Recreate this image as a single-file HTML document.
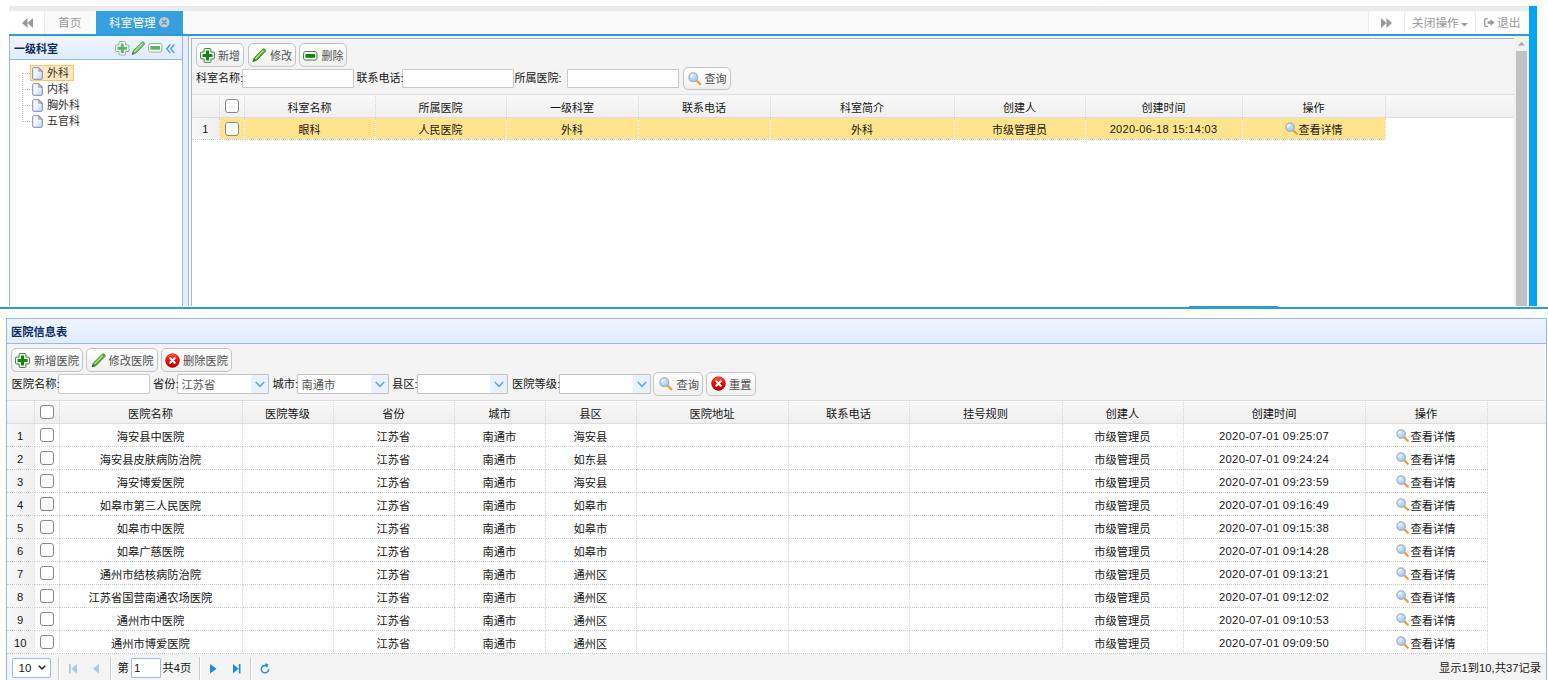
<!DOCTYPE html><html lang="zh-CN"><head><meta charset="utf-8"><title>科室管理</title><style>
*{box-sizing:border-box;margin:0;padding:0}
html,body{width:1548px;height:680px;overflow:hidden;background:#fff}
body{position:relative;font-family:"Liberation Sans","Noto Sans CJK SC",sans-serif;font-size:11.25px;color:#161616;line-height:1}
.a{position:absolute}
.ic{display:block;position:absolute;overflow:visible}
.t{position:absolute;white-space:nowrap;font-size:inherit;line-height:14px;height:14px;z-index:2}
.btn{position:absolute;border:1px solid #c4c4c4;border-radius:5px;background:linear-gradient(#fff,#f0f0f0)}
.btn .t{color:#505050}
.inp{position:absolute;border:1px solid #c9c9c9;background:#fff;border-radius:1px}
.combo{position:absolute;border:1px solid #c2c2c2;background:#fff;border-radius:1px}
.combo i{position:absolute;right:0;top:0;bottom:0;width:17px;background:#e8f1fd}
.combo .t{color:#555;left:3.5px;top:3px}
table{border-collapse:collapse;table-layout:fixed;position:absolute}
td,th{font-weight:normal;font-size:inherit;line-height:14px;text-align:center;white-space:nowrap;overflow:hidden;border-right:1px dotted #d4d4d4;border-bottom:1px dotted #ccc;padding:6px 0 0 0;position:relative;vertical-align:top}
th{border-bottom:1px solid #ddd;padding-top:7px}
.tt td{padding-top:5px}
td.rn{background:linear-gradient(90deg,#f9f9f9,#efefef)}
.cb{position:absolute;left:50%;margin-left:-7px;top:4.5px;width:14px;height:14px;border:1.2px solid #888;border-radius:3px;background:#fff}
th .cb{top:5px}
.dt{letter-spacing:.29px;position:relative;top:-1px}
td.rn{padding-top:5px}
.tt td.rn{padding-top:4px}
.lk{display:inline-block;position:relative;padding-left:14px}
.lk .ic{left:0;top:0}
</style></head><body>
<svg width="0" height="0" style="position:absolute;left:0;top:0"><defs><linearGradient id="gc" x1="0" y1="0" x2="0" y2="1"><stop offset="0" stop-color="#ff5a48"/><stop offset=".45" stop-color="#f01010"/><stop offset="1" stop-color="#b80000"/></linearGradient><radialGradient id="gs" cx=".4" cy=".35" r=".7"><stop offset="0" stop-color="#dceeff"/><stop offset="1" stop-color="#8cc4fa"/></radialGradient><linearGradient id="gf" x1="0" y1="0" x2="1" y2="1"><stop offset="0" stop-color="#fff"/><stop offset=".45" stop-color="#f2f7ff"/><stop offset="1" stop-color="#bcd4f6"/></linearGradient></defs></svg>
<div style="font-size:11px">
<div class="a" style="left:160px;top:0px;width:940px;height:2px;background:#fbfbfb"></div>
<div class="a" style="left:9px;top:6px;width:1520px;height:5px;background:#ebebed"></div>
<div class="a" style="left:9px;top:11px;width:1520px;height:23px;background:#fafafa"></div>
<div class="a" style="left:9px;top:11px;width:35px;height:23px;background:#fff"></div>
<div class="a" style="left:44px;top:11px;width:1px;height:23px;background:#ececec"></div>
<svg class="ic" style="left:21.5px;top:18px" width="11" height="10" viewBox="0 0 11 10"><path d="M5.5 0v10L0 5zM11 0v10L5.5 5z" fill="#999"/></svg>
<div class="t" style="left:58px;top:16px;font-size:11.7px;color:#999">首页</div>
<div class="a" style="left:96px;top:11px;width:87px;height:23px;background:#369fde"></div>
<div class="t" style="left:109px;top:16px;font-size:11.7px;color:#fff">科室管理</div>
<svg class="ic" style="left:159px;top:17px" width="10.5" height="10.5" viewBox="0 0 10 10"><circle cx="5" cy="5" r="5" fill="#cbc8c3"/><path d="M3.3 3.3l3.4 3.4M6.7 3.3l-3.4 3.4" stroke="#369fde" stroke-width="1.5" stroke-linecap="round"/></svg>
<div class="a" style="left:1369px;top:11px;width:160px;height:23px;background:#fff"></div>
<div class="a" style="left:1368px;top:11px;width:1px;height:23px;background:#ececec"></div>
<div class="a" style="left:1404px;top:11px;width:1px;height:23px;background:#ececec"></div>
<div class="a" style="left:1475px;top:11px;width:1px;height:23px;background:#ececec"></div>
<svg class="ic" style="left:1380.5px;top:18px" width="11" height="10" viewBox="0 0 11 10"><path d="M0 0v10l5.5-5zM5.5 0v10L11 5z" fill="#999"/></svg>
<div class="t" style="left:1412px;top:16px;font-size:11.7px;color:#999">关闭操作</div>
<svg class="ic" style="left:1461px;top:23px" width="7" height="3.5" viewBox="0 0 7 3.5"><path d="M0 0h7L3.5 3.5z" fill="#999"/></svg>
<svg class="ic" style="left:1484px;top:18px" width="10.5" height="9" viewBox="0 0 10.5 9"><path d="M3.8 .7H2a1.3 1.3 0 0 0-1.3 1.3v5a1.3 1.3 0 0 0 1.3 1.3h1.8" fill="none" stroke="#999" stroke-width="1.3"/><path d="M3.6 3.3h3V1L10.5 4.5 6.6 8V5.7h-3z" fill="#999"/></svg>
<div class="t" style="left:1497px;top:16px;font-size:11.7px;color:#999">退出</div>
<div class="a" style="left:9px;top:34px;width:1520px;height:2px;background:#2e9ade"></div>
<div class="a" style="left:1529px;top:6px;width:8px;height:300px;background:#00a4f6"></div>
<div class="a" style="left:9px;top:36px;width:174px;height:270px;border-left:1px solid #95b8e7;border-right:1px solid #95b8e7;background:#fff"></div>
<div class="a" style="left:10px;top:36px;width:172px;height:24px;background:linear-gradient(#eff5ff,#e0ecff);border-bottom:1px solid #95b8e7"></div>
<div class="t" style="left:14px;top:42px;font-weight:bold;color:#0e2d5f">一级科室</div>
<svg class="ic" style="left:115px;top:41px" width="14.5" height="14.5" viewBox="0 0 15 15" ><path d="M5 .6h5a.9.9 0 0 1 .9.9V4.1h2.6a.9.9 0 0 1 .9.9v5a.9.9 0 0 1-.9.9H10.9v2.6a.9.9 0 0 1-.9.9H5a.9.9 0 0 1-.9-.9V10.9H1.5a.9.9 0 0 1-.9-.9V5a.9.9 0 0 1 .9-.9h2.6V1.5A.9.9 0 0 1 5 .6z" fill="#fff" stroke="#8aac8d" stroke-width="1"/><path d="M6 2.5h3V6h3.5v3H9v3.5H6V9H2.5V6H6z" fill="#5cb565"/></svg>
<svg opacity=".8" class="ic" style="left:131.2px;top:40.8px" width="14.5" height="14.5" viewBox="0 0 14 14" ><path d="M1 13l1.2-3.6L10.6 1.2c.5-.5 1.2-.5 1.7 0l.5.5c.5.5.5 1.2 0 1.7L4.6 11.8z" fill="#4db32a" stroke="#2f7d1c" stroke-width=".8" stroke-linejoin="round"/><path d="M3.3 10.2L11.2 2.3" stroke="#b6ec8c" stroke-width="1.1"/><path d="M1 13l.8-2.4 1.6 1.6z" fill="#4a4a3a"/></svg>
<svg class="ic" style="left:147.5px;top:43.2px" width="14.5" height="9.7" viewBox="0 0 15 10" ><rect x=".6" y=".6" width="13.8" height="8.8" rx="2" fill="#fff" stroke="#8aac8d" stroke-width="1"/><rect x="2.5" y="3" width="10" height="4" rx=".4" fill="#5cb565"/></svg>
<svg class="ic" style="left:166px;top:43.5px" width="9" height="9.5" viewBox="0 0 9 9.5"><path d="M4.3 .5L.8 4.75l3.5 4.25M8.3 .5L4.8 4.75l3.5 4.25" fill="none" stroke="#4a9be8" stroke-width="1.3"/></svg>
<div class="a" style="left:22px;top:73px;width:0px;height:49px;border-left:1px dotted #c4c4c4"></div>
<div class="a" style="left:22px;top:73px;width:8px;height:0px;border-top:1px dotted #c4c4c4"></div>
<div class="a" style="left:30px;top:65px;width:44px;height:16px;background:#ffe9bf;border:1px solid #ffc26b"></div>
<svg class="ic" style="left:32px;top:66.5px" width="11" height="13" viewBox="0 0 11 13" ><path d="M.7 1.5a.8.8 0 0 1 .8-.8H7l3.3 3.3v7.5a.8.8 0 0 1-.8.8h-8a.8.8 0 0 1-.8-.8z" fill="url(#gf)" stroke="#8088b8" stroke-width="1"/><path d="M6.8 .9v3.3h3.3z" fill="#c8d4ee" stroke="#7f88b8" stroke-width=".8" stroke-linejoin="round"/></svg>
<div class="t" style="left:47px;top:66px;color:#333">外科</div>
<div class="a" style="left:22px;top:89px;width:8px;height:0px;border-top:1px dotted #c4c4c4"></div>
<svg class="ic" style="left:32px;top:82.5px" width="11" height="13" viewBox="0 0 11 13" ><path d="M.7 1.5a.8.8 0 0 1 .8-.8H7l3.3 3.3v7.5a.8.8 0 0 1-.8.8h-8a.8.8 0 0 1-.8-.8z" fill="url(#gf)" stroke="#8088b8" stroke-width="1"/><path d="M6.8 .9v3.3h3.3z" fill="#c8d4ee" stroke="#7f88b8" stroke-width=".8" stroke-linejoin="round"/></svg>
<div class="t" style="left:47px;top:82px;color:#333">内科</div>
<div class="a" style="left:22px;top:105px;width:8px;height:0px;border-top:1px dotted #c4c4c4"></div>
<svg class="ic" style="left:32px;top:98.5px" width="11" height="13" viewBox="0 0 11 13" ><path d="M.7 1.5a.8.8 0 0 1 .8-.8H7l3.3 3.3v7.5a.8.8 0 0 1-.8.8h-8a.8.8 0 0 1-.8-.8z" fill="url(#gf)" stroke="#8088b8" stroke-width="1"/><path d="M6.8 .9v3.3h3.3z" fill="#c8d4ee" stroke="#7f88b8" stroke-width=".8" stroke-linejoin="round"/></svg>
<div class="t" style="left:47px;top:98px;color:#333">胸外科</div>
<div class="a" style="left:22px;top:121px;width:8px;height:0px;border-top:1px dotted #c4c4c4"></div>
<svg class="ic" style="left:32px;top:114.5px" width="11" height="13" viewBox="0 0 11 13" ><path d="M.7 1.5a.8.8 0 0 1 .8-.8H7l3.3 3.3v7.5a.8.8 0 0 1-.8.8h-8a.8.8 0 0 1-.8-.8z" fill="url(#gf)" stroke="#8088b8" stroke-width="1"/><path d="M6.8 .9v3.3h3.3z" fill="#c8d4ee" stroke="#7f88b8" stroke-width=".8" stroke-linejoin="round"/></svg>
<div class="t" style="left:47px;top:114px;color:#333">五官科</div>
<div class="a" style="left:183px;top:36px;width:5px;height:270px;background:#e6eefc"></div>
<div class="a" style="left:188px;top:36px;width:1326px;height:270px;border-left:1px solid #95b8e7;background:#fff"></div>
<div class="a" style="left:190.5px;top:38px;width:1323.5px;height:268px;border-left:1px solid #95b8e7;border-top:1px solid #95b8e7"></div>
<div class="a" style="left:191.5px;top:39px;width:1322.5px;height:56px;background:#f4f4f4;border-bottom:1px solid #ddd"></div>
<div class="btn" style="left:196px;top:43px;width:48px;height:24px">
<svg class="ic" style="left:3px;top:3.5px" width="15" height="15" viewBox="0 0 15 15" ><path d="M5 .6h5a.9.9 0 0 1 .9.9V4.1h2.6a.9.9 0 0 1 .9.9v5a.9.9 0 0 1-.9.9H10.9v2.6a.9.9 0 0 1-.9.9H5a.9.9 0 0 1-.9-.9V10.9H1.5a.9.9 0 0 1-.9-.9V5a.9.9 0 0 1 .9-.9h2.6V1.5A.9.9 0 0 1 5 .6z" fill="#fff" stroke="#3a7d3a" stroke-width="1"/><path d="M6 2.5h3V6h3.5v3H9v3.5H6V9H2.5V6H6z" fill="#0a8a0a"/></svg>
<div class="t" style="left:21px;top:4.5px;">新增</div>
</div>
<div class="btn" style="left:248px;top:43px;width:48px;height:24px">
<svg class="ic" style="left:3px;top:4.200000000000003px" width="14.5" height="14.5" viewBox="0 0 14 14" ><path d="M1 13l1.2-3.6L10.6 1.2c.5-.5 1.2-.5 1.7 0l.5.5c.5.5.5 1.2 0 1.7L4.6 11.8z" fill="#4db32a" stroke="#2f7d1c" stroke-width=".8" stroke-linejoin="round"/><path d="M3.3 10.2L11.2 2.3" stroke="#b6ec8c" stroke-width="1.1"/><path d="M1 13l.8-2.4 1.6 1.6z" fill="#4a4a3a"/></svg>
<div class="t" style="left:21px;top:4.5px;">修改</div>
</div>
<div class="btn" style="left:299px;top:43px;width:48px;height:24px">
<svg class="ic" style="left:3px;top:6.5px" width="14.5" height="9.7" viewBox="0 0 15 10" ><rect x=".6" y=".6" width="13.8" height="8.8" rx="2" fill="#fff" stroke="#3a7d3a" stroke-width="1"/><rect x="2.5" y="3" width="10" height="4" rx=".4" fill="#0a8a0a"/></svg>
<div class="t" style="left:21.5px;top:4.5px;">删除</div>
</div>
<div class="t" style="left:196px;top:71px;">科室名称:</div>
<div class="a" style="left:241.5px;top:69px;width:112px;height:19px;border:1px solid #c9c9c9;background:#fff;border-radius:1px"></div>
<div class="t" style="left:356.5px;top:71px;">联系电话:</div>
<div class="a" style="left:402px;top:69px;width:112px;height:19px;border:1px solid #c9c9c9;background:#fff;border-radius:1px"></div>
<div class="t" style="left:514.5px;top:71px;">所属医院:</div>
<div class="a" style="left:567px;top:69px;width:112px;height:19px;border:1px solid #c9c9c9;background:#fff;border-radius:1px"></div>
<div class="btn" style="left:682.5px;top:67px;width:48px;height:23px">
<svg class="ic" style="left:4px;top:4px" width="13.5" height="13.5" viewBox="0 0 14 14" ><path d="M9 9l3.7 3.7" stroke="#eaa030" stroke-width="2.4" stroke-linecap="round"/><circle cx="5.5" cy="5.5" r="4.6" fill="url(#gs)" stroke="#b0b2b6" stroke-width="1.3"/><path d="M2.9 5a2.8 2.8 0 0 1 2.4-2.3" stroke="#fff" stroke-width="1.1" fill="none" stroke-linecap="round" opacity=".8"/></svg>
<div class="t" style="left:21px;top:4px;">查询</div>
</div>
<div class="a" style="left:191.5px;top:95px;width:1322.5px;height:23px;background:linear-gradient(#f9f9f9,#efefef)"></div>
<div class="a" style="left:1385px;top:117px;width:129px;height:1px;background:#ddd"></div>
<table class="tt" style="left:192px;top:94px;width:1193px;font-size:11px"><colgroup><col style="width:27px"><col style="width:25px"><col style="width:131px"><col style="width:131px"><col style="width:132px"><col style="width:132px"><col style="width:184px"><col style="width:131px"><col style="width:157px"><col style="width:143px"></colgroup>
<tr style="height:23px"><th></th><th><span class="cb"></span></th><th>科室名称</th><th>所属医院</th><th>一级科室</th><th>联系电话</th><th>科室简介</th><th>创建人</th><th>创建时间</th><th>操作</th></tr>
<tr style="height:22px;background:#ffe48d"><td class="rn">1</td><td class=""><span class="cb"></span></td><td class="">眼科</td><td class="">人民医院</td><td class="">外科</td><td class=""></td><td class="">外科</td><td class="">市级管理员</td><td class=""><span class="dt">2020-06-18 15:14:03</span></td><td class=""><span class="lk"><svg class="ic" style="left:0;top:-1px" width="13" height="13" viewBox="0 0 14 14" ><path d="M9 9l3.7 3.7" stroke="#eaa030" stroke-width="2.4" stroke-linecap="round"/><circle cx="5.5" cy="5.5" r="4.6" fill="url(#gs)" stroke="#b0b2b6" stroke-width="1.3"/><path d="M2.9 5a2.8 2.8 0 0 1 2.4-2.3" stroke="#fff" stroke-width="1.1" fill="none" stroke-linecap="round" opacity=".8"/></svg>查看详情</span></td></tr>
</table>
<div class="a" style="left:1514px;top:36px;width:15px;height:270px;background:#f1f1f1"></div>
<div class="a" style="left:1516px;top:51px;width:11px;height:255px;background:#c1c1c1"></div>
<svg class="ic" style="left:1518px;top:42px" width="7" height="3.5" viewBox="0 0 7 3.5"><path d="M0 3.5h7L3.5 0z" fill="#a3a3a3"/></svg>
<div class="a" style="left:0px;top:307px;width:1548px;height:2px;background:#2e9ade"></div>
<div class="a" style="left:1189px;top:306px;width:89px;height:2px;background:#2e9ade"></div>
</div>
<div style="font-size:11.25px">
<div class="a" style="left:0px;top:309px;width:1548px;height:371px;background:#fefef8"></div>
<div class="a" style="left:6px;top:318px;width:1541px;height:362px;border:1px solid #95b8e7;border-bottom:0;background:#fff"></div>
<div class="a" style="left:7px;top:319px;width:1539px;height:24.5px;background:linear-gradient(#eff5ff,#e0ecff);border-bottom:1px solid #95b8e7"></div>
<div class="t" style="left:11px;top:325px;font-weight:bold;color:#0e2d5f">医院信息表</div>
<div class="a" style="left:7px;top:343.5px;width:1538px;height:57.5px;background:#f4f4f4;border-bottom:1px solid #ddd"></div>
<div class="btn" style="left:11px;top:348px;width:71.5px;height:23.5px">
<svg class="ic" style="left:3px;top:3.5px" width="15" height="15" viewBox="0 0 15 15" ><path d="M5 .6h5a.9.9 0 0 1 .9.9V4.1h2.6a.9.9 0 0 1 .9.9v5a.9.9 0 0 1-.9.9H10.9v2.6a.9.9 0 0 1-.9.9H5a.9.9 0 0 1-.9-.9V10.9H1.5a.9.9 0 0 1-.9-.9V5a.9.9 0 0 1 .9-.9h2.6V1.5A.9.9 0 0 1 5 .6z" fill="#fff" stroke="#3a7d3a" stroke-width="1"/><path d="M6 2.5h3V6h3.5v3H9v3.5H6V9H2.5V6H6z" fill="#0a8a0a"/></svg>
<div class="t" style="left:22px;top:4.5px;">新增医院</div>
</div>
<div class="btn" style="left:86px;top:348px;width:71.5px;height:23.5px">
<svg class="ic" style="left:3.5px;top:4.300000000000011px" width="15" height="15" viewBox="0 0 14 14" ><path d="M1 13l1.2-3.6L10.6 1.2c.5-.5 1.2-.5 1.7 0l.5.5c.5.5.5 1.2 0 1.7L4.6 11.8z" fill="#4db32a" stroke="#2f7d1c" stroke-width=".8" stroke-linejoin="round"/><path d="M3.3 10.2L11.2 2.3" stroke="#b6ec8c" stroke-width="1.1"/><path d="M1 13l.8-2.4 1.6 1.6z" fill="#4a4a3a"/></svg>
<div class="t" style="left:21.5px;top:4.5px;">修改医院</div>
</div>
<div class="btn" style="left:160.5px;top:348px;width:71.5px;height:23.5px">
<svg class="ic" style="left:3px;top:3.5px" width="15" height="15" viewBox="0 0 16 16" ><circle cx="8" cy="8" r="7.6" fill="url(#gc)"/><circle cx="8" cy="8" r="7.2" fill="none" stroke="#c00000" stroke-width=".8" opacity=".6"/><path d="M5.6 5.6l4.8 4.8M10.4 5.6l-4.8 4.8" stroke="#fff" stroke-width="2.3" stroke-linecap="round"/></svg>
<div class="t" style="left:21.5px;top:4.5px;">删除医院</div>
</div>
<div class="t" style="left:11.5px;top:376.5px;">医院名称:</div>
<div class="a" style="left:58px;top:374px;width:92px;height:19.5px;border:1px solid #c9c9c9;background:#fff;border-radius:1px"></div>
<div class="t" style="left:153px;top:376.5px;">省份:</div>
<div class="combo" style="left:177px;top:374px;width:92px;height:19.5px"><i><svg class="ic" style="left:3.5px;top:6px" width="10" height="6.5" viewBox="0 0 10 6.5"><path d="M.8 1l4.2 4.4L9.2 1" fill="none" stroke="#55acf0" stroke-width="1.6"/></svg></i><div class="t">江苏省</div></div>
<div class="t" style="left:272.5px;top:376.5px;">城市:</div>
<div class="combo" style="left:297px;top:374px;width:92px;height:19.5px"><i><svg class="ic" style="left:3.5px;top:6px" width="10" height="6.5" viewBox="0 0 10 6.5"><path d="M.8 1l4.2 4.4L9.2 1" fill="none" stroke="#55acf0" stroke-width="1.6"/></svg></i><div class="t">南通市</div></div>
<div class="t" style="left:392px;top:376.5px;">县区:</div>
<div class="combo" style="left:416.5px;top:374px;width:91.5px;height:19.5px"><i><svg class="ic" style="left:3.5px;top:6px" width="10" height="6.5" viewBox="0 0 10 6.5"><path d="M.8 1l4.2 4.4L9.2 1" fill="none" stroke="#55acf0" stroke-width="1.6"/></svg></i></div>
<div class="t" style="left:512px;top:376.5px;">医院等级:</div>
<div class="combo" style="left:559px;top:374px;width:92px;height:19.5px"><i><svg class="ic" style="left:3.5px;top:6px" width="10" height="6.5" viewBox="0 0 10 6.5"><path d="M.8 1l4.2 4.4L9.2 1" fill="none" stroke="#55acf0" stroke-width="1.6"/></svg></i></div>
<div class="btn" style="left:653px;top:372px;width:50px;height:24px">
<svg class="ic" style="left:4.5px;top:4px" width="13.5" height="13.5" viewBox="0 0 14 14" ><path d="M9 9l3.7 3.7" stroke="#eaa030" stroke-width="2.4" stroke-linecap="round"/><circle cx="5.5" cy="5.5" r="4.6" fill="url(#gs)" stroke="#b0b2b6" stroke-width="1.3"/><path d="M2.9 5a2.8 2.8 0 0 1 2.4-2.3" stroke="#fff" stroke-width="1.1" fill="none" stroke-linecap="round" opacity=".8"/></svg>
<div class="t" style="left:22.5px;top:4.5px;">查询</div>
</div>
<div class="btn" style="left:706px;top:372px;width:50px;height:24px">
<svg class="ic" style="left:4px;top:3px" width="15" height="15" viewBox="0 0 16 16" ><circle cx="8" cy="8" r="7.6" fill="url(#gc)"/><circle cx="8" cy="8" r="7.2" fill="none" stroke="#c00000" stroke-width=".8" opacity=".6"/><path d="M5.6 5.6l4.8 4.8M10.4 5.6l-4.8 4.8" stroke="#fff" stroke-width="2.3" stroke-linecap="round"/></svg>
<div class="t" style="left:22px;top:4.5px;">重置</div>
</div>
<div class="a" style="left:7px;top:401px;width:1539px;height:22px;background:linear-gradient(#f9f9f9,#efefef)"></div>
<div class="a" style="left:1487px;top:423px;width:59px;height:1px;background:#ddd"></div>
<table class="tb" style="left:7px;top:400px;width:1480px;font-size:11.25px"><colgroup><col style="width:27px"><col style="width:25px"><col style="width:183px"><col style="width:91px"><col style="width:121px"><col style="width:91px"><col style="width:91px"><col style="width:152px"><col style="width:121px"><col style="width:153px"><col style="width:121px"><col style="width:182px"><col style="width:122px"></colgroup>
<tr style="height:23px"><th></th><th><span class="cb"></span></th><th>医院名称</th><th>医院等级</th><th>省份</th><th>城市</th><th>县区</th><th>医院地址</th><th>联系电话</th><th>挂号规则</th><th>创建人</th><th>创建时间</th><th>操作</th></tr>
<tr style="height:23px;"><td class="rn">1</td><td class=""><span class="cb"></span></td><td class="">海安县中医院</td><td class=""></td><td class="">江苏省</td><td class="">南通市</td><td class="">海安县</td><td class=""></td><td class=""></td><td class=""></td><td class="">市级管理员</td><td class=""><span class="dt">2020-07-01 09:25:07</span></td><td class=""><span class="lk"><svg class="ic" style="left:0;top:-1px" width="13" height="13" viewBox="0 0 14 14" ><path d="M9 9l3.7 3.7" stroke="#eaa030" stroke-width="2.4" stroke-linecap="round"/><circle cx="5.5" cy="5.5" r="4.6" fill="url(#gs)" stroke="#b0b2b6" stroke-width="1.3"/><path d="M2.9 5a2.8 2.8 0 0 1 2.4-2.3" stroke="#fff" stroke-width="1.1" fill="none" stroke-linecap="round" opacity=".8"/></svg>查看详情</span></td></tr>
<tr style="height:23px;"><td class="rn">2</td><td class=""><span class="cb"></span></td><td class="">海安县皮肤病防治院</td><td class=""></td><td class="">江苏省</td><td class="">南通市</td><td class="">如东县</td><td class=""></td><td class=""></td><td class=""></td><td class="">市级管理员</td><td class=""><span class="dt">2020-07-01 09:24:24</span></td><td class=""><span class="lk"><svg class="ic" style="left:0;top:-1px" width="13" height="13" viewBox="0 0 14 14" ><path d="M9 9l3.7 3.7" stroke="#eaa030" stroke-width="2.4" stroke-linecap="round"/><circle cx="5.5" cy="5.5" r="4.6" fill="url(#gs)" stroke="#b0b2b6" stroke-width="1.3"/><path d="M2.9 5a2.8 2.8 0 0 1 2.4-2.3" stroke="#fff" stroke-width="1.1" fill="none" stroke-linecap="round" opacity=".8"/></svg>查看详情</span></td></tr>
<tr style="height:23px;"><td class="rn">3</td><td class=""><span class="cb"></span></td><td class="">海安博爱医院</td><td class=""></td><td class="">江苏省</td><td class="">南通市</td><td class="">海安县</td><td class=""></td><td class=""></td><td class=""></td><td class="">市级管理员</td><td class=""><span class="dt">2020-07-01 09:23:59</span></td><td class=""><span class="lk"><svg class="ic" style="left:0;top:-1px" width="13" height="13" viewBox="0 0 14 14" ><path d="M9 9l3.7 3.7" stroke="#eaa030" stroke-width="2.4" stroke-linecap="round"/><circle cx="5.5" cy="5.5" r="4.6" fill="url(#gs)" stroke="#b0b2b6" stroke-width="1.3"/><path d="M2.9 5a2.8 2.8 0 0 1 2.4-2.3" stroke="#fff" stroke-width="1.1" fill="none" stroke-linecap="round" opacity=".8"/></svg>查看详情</span></td></tr>
<tr style="height:23px;"><td class="rn">4</td><td class=""><span class="cb"></span></td><td class="">如皋市第三人民医院</td><td class=""></td><td class="">江苏省</td><td class="">南通市</td><td class="">如皋市</td><td class=""></td><td class=""></td><td class=""></td><td class="">市级管理员</td><td class=""><span class="dt">2020-07-01 09:16:49</span></td><td class=""><span class="lk"><svg class="ic" style="left:0;top:-1px" width="13" height="13" viewBox="0 0 14 14" ><path d="M9 9l3.7 3.7" stroke="#eaa030" stroke-width="2.4" stroke-linecap="round"/><circle cx="5.5" cy="5.5" r="4.6" fill="url(#gs)" stroke="#b0b2b6" stroke-width="1.3"/><path d="M2.9 5a2.8 2.8 0 0 1 2.4-2.3" stroke="#fff" stroke-width="1.1" fill="none" stroke-linecap="round" opacity=".8"/></svg>查看详情</span></td></tr>
<tr style="height:23px;"><td class="rn">5</td><td class=""><span class="cb"></span></td><td class="">如皋市中医院</td><td class=""></td><td class="">江苏省</td><td class="">南通市</td><td class="">如皋市</td><td class=""></td><td class=""></td><td class=""></td><td class="">市级管理员</td><td class=""><span class="dt">2020-07-01 09:15:38</span></td><td class=""><span class="lk"><svg class="ic" style="left:0;top:-1px" width="13" height="13" viewBox="0 0 14 14" ><path d="M9 9l3.7 3.7" stroke="#eaa030" stroke-width="2.4" stroke-linecap="round"/><circle cx="5.5" cy="5.5" r="4.6" fill="url(#gs)" stroke="#b0b2b6" stroke-width="1.3"/><path d="M2.9 5a2.8 2.8 0 0 1 2.4-2.3" stroke="#fff" stroke-width="1.1" fill="none" stroke-linecap="round" opacity=".8"/></svg>查看详情</span></td></tr>
<tr style="height:23px;"><td class="rn">6</td><td class=""><span class="cb"></span></td><td class="">如皋广慈医院</td><td class=""></td><td class="">江苏省</td><td class="">南通市</td><td class="">如皋市</td><td class=""></td><td class=""></td><td class=""></td><td class="">市级管理员</td><td class=""><span class="dt">2020-07-01 09:14:28</span></td><td class=""><span class="lk"><svg class="ic" style="left:0;top:-1px" width="13" height="13" viewBox="0 0 14 14" ><path d="M9 9l3.7 3.7" stroke="#eaa030" stroke-width="2.4" stroke-linecap="round"/><circle cx="5.5" cy="5.5" r="4.6" fill="url(#gs)" stroke="#b0b2b6" stroke-width="1.3"/><path d="M2.9 5a2.8 2.8 0 0 1 2.4-2.3" stroke="#fff" stroke-width="1.1" fill="none" stroke-linecap="round" opacity=".8"/></svg>查看详情</span></td></tr>
<tr style="height:23px;"><td class="rn">7</td><td class=""><span class="cb"></span></td><td class="">通州市结核病防治院</td><td class=""></td><td class="">江苏省</td><td class="">南通市</td><td class="">通州区</td><td class=""></td><td class=""></td><td class=""></td><td class="">市级管理员</td><td class=""><span class="dt">2020-07-01 09:13:21</span></td><td class=""><span class="lk"><svg class="ic" style="left:0;top:-1px" width="13" height="13" viewBox="0 0 14 14" ><path d="M9 9l3.7 3.7" stroke="#eaa030" stroke-width="2.4" stroke-linecap="round"/><circle cx="5.5" cy="5.5" r="4.6" fill="url(#gs)" stroke="#b0b2b6" stroke-width="1.3"/><path d="M2.9 5a2.8 2.8 0 0 1 2.4-2.3" stroke="#fff" stroke-width="1.1" fill="none" stroke-linecap="round" opacity=".8"/></svg>查看详情</span></td></tr>
<tr style="height:23px;"><td class="rn">8</td><td class=""><span class="cb"></span></td><td class="">江苏省国营南通农场医院</td><td class=""></td><td class="">江苏省</td><td class="">南通市</td><td class="">通州区</td><td class=""></td><td class=""></td><td class=""></td><td class="">市级管理员</td><td class=""><span class="dt">2020-07-01 09:12:02</span></td><td class=""><span class="lk"><svg class="ic" style="left:0;top:-1px" width="13" height="13" viewBox="0 0 14 14" ><path d="M9 9l3.7 3.7" stroke="#eaa030" stroke-width="2.4" stroke-linecap="round"/><circle cx="5.5" cy="5.5" r="4.6" fill="url(#gs)" stroke="#b0b2b6" stroke-width="1.3"/><path d="M2.9 5a2.8 2.8 0 0 1 2.4-2.3" stroke="#fff" stroke-width="1.1" fill="none" stroke-linecap="round" opacity=".8"/></svg>查看详情</span></td></tr>
<tr style="height:23px;"><td class="rn">9</td><td class=""><span class="cb"></span></td><td class="">通州市中医院</td><td class=""></td><td class="">江苏省</td><td class="">南通市</td><td class="">通州区</td><td class=""></td><td class=""></td><td class=""></td><td class="">市级管理员</td><td class=""><span class="dt">2020-07-01 09:10:53</span></td><td class=""><span class="lk"><svg class="ic" style="left:0;top:-1px" width="13" height="13" viewBox="0 0 14 14" ><path d="M9 9l3.7 3.7" stroke="#eaa030" stroke-width="2.4" stroke-linecap="round"/><circle cx="5.5" cy="5.5" r="4.6" fill="url(#gs)" stroke="#b0b2b6" stroke-width="1.3"/><path d="M2.9 5a2.8 2.8 0 0 1 2.4-2.3" stroke="#fff" stroke-width="1.1" fill="none" stroke-linecap="round" opacity=".8"/></svg>查看详情</span></td></tr>
<tr style="height:23px;"><td class="rn">10</td><td class=""><span class="cb"></span></td><td class="">通州市博爱医院</td><td class=""></td><td class="">江苏省</td><td class="">南通市</td><td class="">通州区</td><td class=""></td><td class=""></td><td class=""></td><td class="">市级管理员</td><td class=""><span class="dt">2020-07-01 09:09:50</span></td><td class=""><span class="lk"><svg class="ic" style="left:0;top:-1px" width="13" height="13" viewBox="0 0 14 14" ><path d="M9 9l3.7 3.7" stroke="#eaa030" stroke-width="2.4" stroke-linecap="round"/><circle cx="5.5" cy="5.5" r="4.6" fill="url(#gs)" stroke="#b0b2b6" stroke-width="1.3"/><path d="M2.9 5a2.8 2.8 0 0 1 2.4-2.3" stroke="#fff" stroke-width="1.1" fill="none" stroke-linecap="round" opacity=".8"/></svg>查看详情</span></td></tr>
</table>
<div class="a" style="left:7px;top:654px;width:1539px;height:26px;background:#f4f4f4"></div>
<div class="a" style="left:1487px;top:653px;width:59px;height:1px;background:#ddd"></div>
<div class="a" style="left:12px;top:658px;width:39px;height:19.5px;border:1px solid #9dbde9;border-radius:2px;background:#fff"></div>
<div class="t" style="left:18.5px;top:661px;font-size:11.5px">10</div>
<svg class="ic" style="left:38px;top:665px" width="8" height="5" viewBox="0 0 8 5"><path d="M.8 .8L4 4l3.2-3.2" fill="none" stroke="#222" stroke-width="1.5"/></svg>
<div class="a" style="left:58px;top:657px;width:1px;height:23px;background:#ccc"></div>
<div class="a" style="left:59px;top:657px;width:1px;height:23px;background:#fff"></div>
<div class="a" style="left:109.5px;top:657px;width:1px;height:23px;background:#ccc"></div>
<div class="a" style="left:110.5px;top:657px;width:1px;height:23px;background:#fff"></div>
<div class="a" style="left:198.5px;top:657px;width:1px;height:23px;background:#ccc"></div>
<div class="a" style="left:199.5px;top:657px;width:1px;height:23px;background:#fff"></div>
<div class="a" style="left:249.5px;top:657px;width:1px;height:23px;background:#ccc"></div>
<div class="a" style="left:250.5px;top:657px;width:1px;height:23px;background:#fff"></div>
<svg class="ic" style="left:68.5px;top:663.5px" width="8" height="9.5" viewBox="0 0 8 10" preserveAspectRatio="none"><path d="M0 0h1.8v10H0zM8 0v10L2.2 5z" fill="#a3c9ef"/></svg>
<svg class="ic" style="left:93px;top:663.5px" width="6" height="9.5" viewBox="0 0 6 10" preserveAspectRatio="none"><path d="M6 0v10L0 5z" fill="#a3c9ef"/></svg>
<div class="t" style="left:117.5px;top:661px;">第</div>
<div class="a" style="left:130.5px;top:658px;width:30px;height:19.5px;border:1px solid #9dbde9;background:#fff;border-radius:1px"></div>
<div class="t" style="left:134px;top:661px;font-size:11.5px">1</div>
<div class="t" style="left:162.5px;top:661px;">共4页</div>
<svg class="ic" style="left:209.5px;top:663.5px" width="6.5" height="9.5" viewBox="0 0 6 10" preserveAspectRatio="none"><path d="M0 0v10l6-5z" fill="#1e8ae6"/></svg>
<svg class="ic" style="left:233px;top:663.5px" width="7.5" height="9.5" viewBox="0 0 8 10" preserveAspectRatio="none"><path d="M6.2 0H8v10H6.2zM0 0v10l5.8-5z" fill="#1e8ae6"/></svg>
<svg class="ic" style="left:259.5px;top:662.5px" width="10" height="11" viewBox="0 0 10 11"><path d="M7.7 3.6A3.7 3.7 0 1 0 8.7 6.3" fill="none" stroke="#1e8ae6" stroke-width="1.4"/><path d="M5 .2L8.6 1.6 6.2 4.5z" fill="#1e8ae6"/></svg>
<div class="t" style="left:0px;top:661px;left:auto;right:7px">显示1到10,共37记录</div>
</div>
</body></html>
